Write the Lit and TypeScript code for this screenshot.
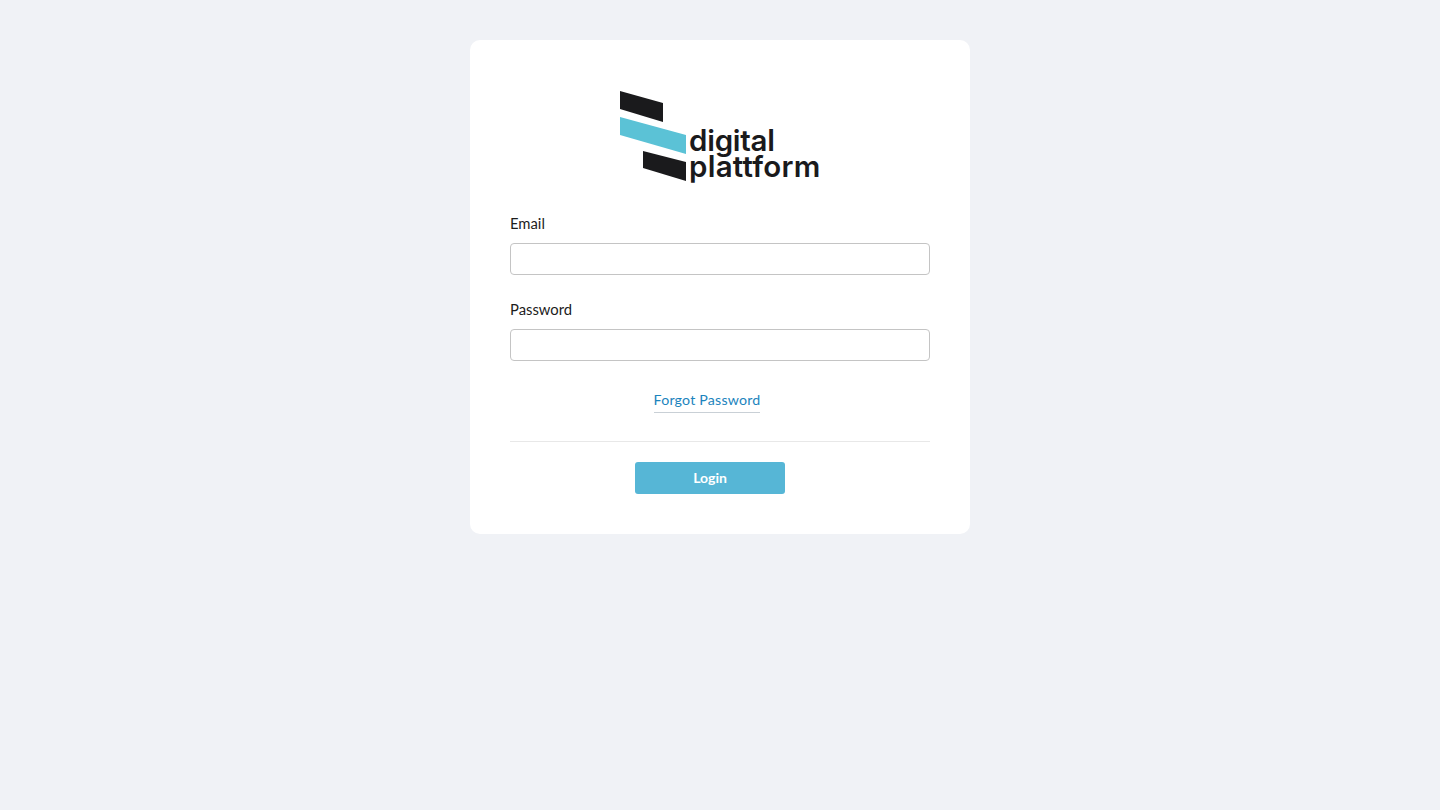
import { LitElement, html, css } from "lit";
import { customElement } from "lit/decorators.js";

@customElement("app-root")
export class AppRoot extends LitElement {
  static styles = css`
    :host {
      display: block;
      min-height: 810px;
      background: #f0f2f6;
      font-family: "Lato", "Noto Sans", sans-serif;
      color: #1c1c1c;
      box-sizing: border-box;
      padding-top: 40px;
    }
    .card {
      width: 500px;
      height: 494px;
      box-sizing: border-box;
      margin: 0 auto;
      background: #fff;
      border-radius: 10px;
      padding: 50px 40px 40px;
      display: flex;
      flex-direction: column;
    }
    .logo {
      display: flex;
      justify-content: center;
      align-items: flex-end;
      height: 92px;
      margin-bottom: 31px;
    }
    .logo svg {
      width: 70px;
      height: 92px;
      display: block;
      flex: none;
      margin-right: -1px;
    }
    .wordmark {
      width: 131px;
      font-family: "Inter", "Liberation Sans", sans-serif;
      font-weight: 600;
      font-size: 29.5px;
      line-height: 26px;
      color: #1a1a1c;
      padding-bottom: 3px;
      white-space: nowrap;
    }
    .wordmark div { height: 26px; }
    .line-top { letter-spacing: -0.25px; }
    .line-bottom { letter-spacing: 0.25px; }
    .field { display: flex; flex-direction: column; }
    label {
      font-size: 14.8px;
      line-height: 20px;
      height: 20px;
      margin-bottom: 10px;
    }
    input {
      height: 32px;
      box-sizing: border-box;
      border: 1px solid #c4c4c4;
      border-radius: 4px;
      background: #fff;
      padding: 0 8px;
      outline: none;
    }
    .field + .field { margin-top: 24px; }
    .forgot-row {
      display: flex;
      justify-content: center;
      padding-right: 26px;
      margin-top: 29px;
    }
    .forgot {
      color: #1b84bd;
      font-size: 14.2px;
      line-height: 20px;
      padding-bottom: 2px;
      border-bottom: 1px solid #c9d0d6;
      text-decoration: none;
      letter-spacing: 0.2px;
    }
    hr {
      border: 0;
      border-top: 1px solid #e8e8e8;
      margin: 28px 0 20px;
      width: 100%;
    }
    .actions {
      display: flex;
      justify-content: center;
      padding-right: 20px;
    }
    button {
      width: 150px;
      height: 32px;
      border: 0;
      border-radius: 3px;
      background: #56b6d6;
      color: #fff;
      font-family: inherit;
      font-size: 14px;
      font-weight: 700;
      padding: 0 0 1px;
    }
  `;

  render() {
    return html`
      <div class="card">
        <div class="logo">
          <svg viewBox="620 90 70 92" aria-hidden="true">
            <polygon points="620,91 663,103 663,122 620,109" fill="#1a1a1c"></polygon>
            <polygon points="620,117 686,135 686,154 620,135" fill="#5bc2d6"></polygon>
            <polygon points="643,151 686,162 686,181 643,168" fill="#1a1a1c"></polygon>
          </svg>
          <div class="wordmark">
            <div class="line-top">digital</div>
            <div class="line-bottom">plattform</div>
          </div>
        </div>
        <div class="field">
          <label>Email</label>
          <input type="text" />
        </div>
        <div class="field">
          <label>Password</label>
          <input type="password" />
        </div>
        <div class="forgot-row"><a class="forgot" href="#">Forgot Password</a></div>
        <hr />
        <div class="actions"><button>Login</button></div>
      </div>
    `;
  }
}
